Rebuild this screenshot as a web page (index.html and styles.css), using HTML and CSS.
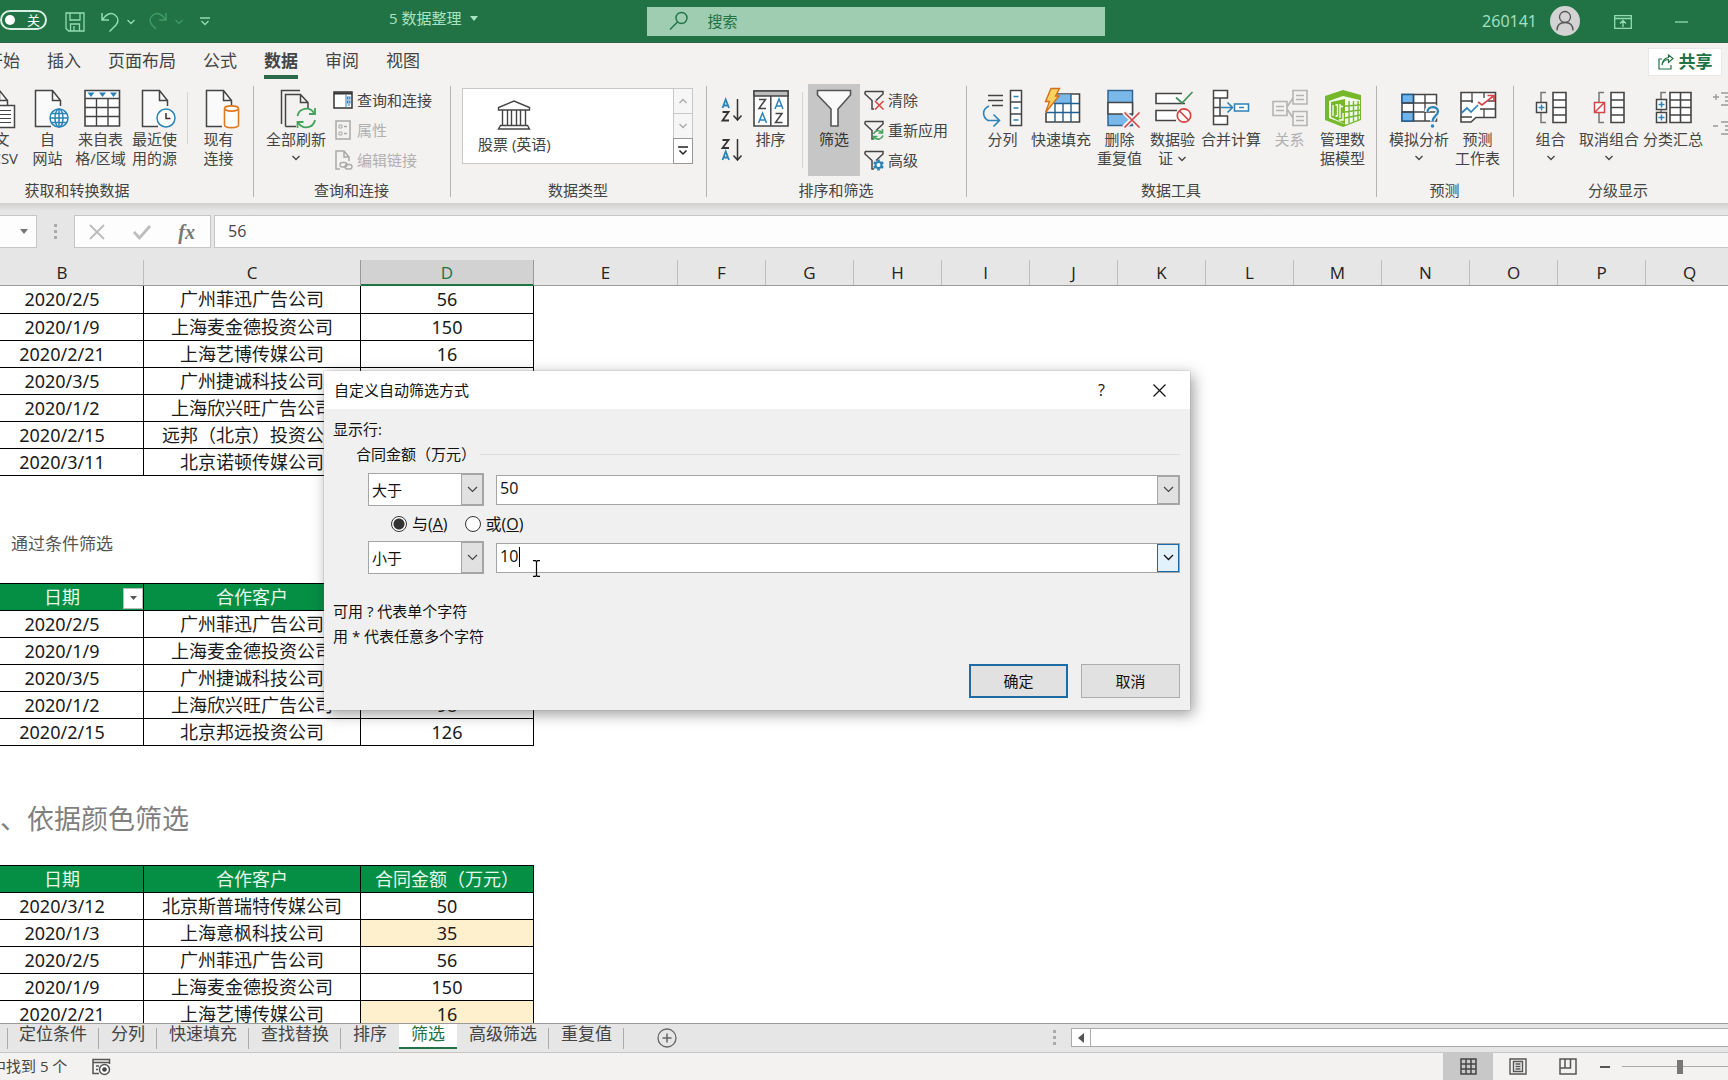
FILE: index.html
```html
<!DOCTYPE html>
<html lang="zh-CN">
<head>
<meta charset="utf-8">
<title>5 数据整理</title>
<link rel="stylesheet" href="styles.css">
</head>
<body>
<svg class="defs" aria-hidden="true">
  <symbol id="doc" viewBox="0 0 40 40"><path d="M7.500 1.500H24.500L33 11.500V37.500H7.500Z" fill="#fafafa"/><path d="M23 37.500H7.500V1.500H24.500L32.500 11.500V17M24.500 1.500V11.500H32.500" fill="none" stroke="#444" stroke-width="1.500"/></symbol>
  <symbol id="chev" viewBox="0 0 10 6"><path d="M1.500 1L5 4.500L8.500 1" fill="none" stroke="currentColor" stroke-width="1.300"/></symbol>
  <symbol id="funnel" viewBox="0 0 20 20"><path d="M1 1.500H19V4L12 10.500M8 19V10.500L1 4V1.500M8 10.500V19H10" fill="none" stroke="#444" stroke-width="1.500"/></symbol>
</svg>

<header class="titlebar">
  <button class="toggle" aria-label="自动保存"><span class="knob"></span>关</button>
  <button class="qa save" aria-label="保存"><svg width="20" height="20" viewBox="0 0 20 20"><path d="M1 1H19V19H3.500L1 16.500ZM5 1V8H15V1M5.500 19V12H14.500V19M9 14V19" fill="none" stroke="#93dcb2" stroke-width="1.300"/></svg></button>
  <button class="qa undo" aria-label="撤销"><svg width="18" height="20" viewBox="0 0 18 20"><path d="M1 1V8H8M1.500 7.500C5 2 10 0 14 3C18 6 17.500 10 15 13L8.500 19.500" fill="none" stroke="#93dcb2" stroke-width="1.500"/></svg><svg class="c1" width="10" height="6"><use href="#chev"/></svg></button>
  <button class="qa redo" aria-label="恢复"><svg width="18" height="20" viewBox="0 0 18 20"><path d="M17 1V8H10M16.500 7.500C13 2 8 0 4 3C0 6 .5 10 3 13L7 17" fill="none" stroke="#3f9a67" stroke-width="1.500"/></svg><svg class="c1" width="10" height="6"><use href="#chev"/></svg></button>
  <button class="qa more" aria-label="自定义快速访问工具栏"><svg width="10" height="10" viewBox="0 0 10 10"><path d="M0 1H10M1.500 4L5 7.500L8.500 4" fill="none" stroke="#93dcb2" stroke-width="1.300"/></svg></button>
  <button class="docname">5 数据整理<svg width="8" height="5" viewBox="0 0 8 5"><path d="M0 0H8L4 5Z" fill="#a9e3c2"/></svg></button>
  <label class="search"><svg width="20" height="20" viewBox="0 0 20 20"><circle cx="12.500" cy="7" r="5.500" fill="none" stroke="#217346" stroke-width="1.400"/><path d="M8.500 11L1 18.500" stroke="#217346" stroke-width="1.400"/></svg><input type="text" placeholder="搜索" aria-label="搜索"></label>
  <div class="account">
    <span>260141</span>
    <svg class="avatar" width="30" height="30" viewBox="0 0 30 30"><circle cx="15" cy="15" r="15" fill="#d3d3d3"/><circle cx="15" cy="11" r="5.500" fill="none" stroke="#555" stroke-width="1.300"/><path d="M7 24.500C7 18.500 11 16.500 15 16.500S23 18.500 23 24.500" fill="none" stroke="#555" stroke-width="1.300"/></svg>
    <button class="qa" aria-label="功能区显示选项"><svg width="18" height="14" viewBox="0 0 18 14"><path d="M.7 .7H17.300V13.300H.7ZM.7 3.500H17.300M9 12V5.500M6 8.500L9 5.500L12 8.500" fill="none" stroke="#93dcb2" stroke-width="1.300"/></svg></button>
    <button class="qa min" aria-label="最小化"><svg width="13" height="2"><path d="M0 1H13" stroke="#93dcb2" stroke-width="1.300"/></svg></button>
  </div>
</header>

<nav class="tabs">
  <a href="#">开始</a><a href="#">插入</a><a href="#">页面布局</a><a href="#">公式</a><a href="#" class="on">数据</a><a href="#">审阅</a><a href="#">视图</a>
  <button class="share"><svg width="16" height="16" viewBox="0 0 16 16"><path d="M4 5H1V15H13V11M4 11C5 7 7 5.500 10.500 5.500V8.500L15 4.500L10.500 1V3.500C6.500 4 4.500 6 4 11Z" fill="none" stroke="#217346" stroke-width="1.200"/></svg>共享</button>
</nav>

<div class="ribbon">
  <section class="group g-get">
    <div class="items">
      <button class="big"><svg width="40" height="40"><use href="#doc"/><path d="M20 16.500H39.500V38.500H20Z" fill="#fff" stroke="#444" stroke-width="1.500"/><path d="M23 21.500H36M23 25.500H36M23 29.500H36M23 33.500H36" stroke="#444"/></svg><span>从文<br>本/CSV</span></button>
      <button class="big"><svg width="40" height="40"><use href="#doc"/><g fill="#fff" stroke="#2b83b8" stroke-width="1.500"><circle cx="31" cy="29" r="9"/><ellipse cx="31" cy="29" rx="4" ry="9"/><path d="M22 29H40M31 20V38M23.500 24.500H38.500M23.500 33.500H38.500" fill="none"/></g></svg><span>自<br>网站</span></button>
      <button class="big"><svg width="40" height="40"><path d="M4 1.500H38.500V37H4Z" fill="#fff" stroke="#444" stroke-width="1.600"/><path d="M4 9.500H38.500M4 18.500H38.500M4 27.500H38.500M15.500 9V37M27 9V37" stroke="#444" stroke-width="1.400"/><path d="M6.500 3.500H13.500L10 8ZM18 3.500H25L21.500 8ZM29 3.500H36L32.500 8Z" fill="#2b83b8"/></svg><span>来自表<br>格/区域</span></button>
      <button class="big wide1"><svg width="40" height="40"><use href="#doc"/><circle cx="31" cy="29" r="9" fill="#fff" stroke="#2b83b8" stroke-width="1.500"/><path d="M31 24V29.500H35.500" fill="none" stroke="#333" stroke-width="1.500"/></svg><span>最近使<br>用的源</span></button>
      <i class="thin short"></i>
      <button class="big wide1"><svg width="40" height="40"><use href="#doc"/><path d="M25.500 20V36C25.500 39.500 39.500 39.500 39.500 36V20" fill="#fff" stroke="#dd7a22" stroke-width="1.600"/><ellipse cx="32.500" cy="19.500" rx="7" ry="2.600" fill="#fff" stroke="#dd7a22" stroke-width="1.600"/></svg><span>现有<br>连接</span></button>
    </div>
    <h3>获取和转换数据</h3>
  </section>
  <section class="group g-query">
    <div class="items">
      <button class="big four"><svg width="40" height="40"><path d="M5.500 35V1.500H24M9.500 37.500V5.500H24.500L32 13.500V19M24.500 5.500V13.500H32M9.500 37.500H20" fill="none" stroke="#444" stroke-width="1.500"/><path d="M21.500 27A9 9 0 0 1 38 24M39 19V25H33M39 31A9 9 0 0 1 22.500 34M21.500 39V33H27.500" fill="none" stroke="#45a35b" stroke-width="1.800"/></svg><span>全部刷新</span><svg class="c2" width="10" height="6"><use href="#chev"/></svg></button>
      <div class="small">
        <button><svg width="20" height="20" viewBox="0 0 20 20"><path d="M1 2H19V18H1Z" fill="#fff" stroke="#333" stroke-width="1.500"/><path d="M1 3.500H19" stroke="#333" stroke-width="2"/><path d="M13 5V18" stroke="#2b83b8"/><path d="M14.500 7H17V9H14.500ZM14.500 11H17V13H14.500ZM14.500 15H17" fill="none" stroke="#2b83b8" stroke-width="1.200"/></svg>查询和连接</button>
        <button disabled><svg width="20" height="20" viewBox="0 0 20 20"><path d="M3 1H17V19H3Z" fill="none" stroke="#a9a9a9" stroke-width="1.500"/><path d="M6 5H9V8H6ZM6 12H9V15H6Z" fill="none" stroke="#a9a9a9"/><path d="M11 6.500H14M11 13.500H14" stroke="#a9a9a9" stroke-width="1.500"/></svg>属性</button>
        <button disabled><svg width="20" height="20" viewBox="0 0 20 20"><path d="M7 19H3V1H11L16 7V11M11 1V7H16" fill="none" stroke="#a9a9a9" stroke-width="1.500"/><rect x="7" y="12.500" width="7" height="4.500" rx="2.200" fill="none" stroke="#a9a9a9" stroke-width="1.300"/><rect x="12" y="14.500" width="7" height="4.500" rx="2.200" fill="none" stroke="#a9a9a9" stroke-width="1.300"/></svg>编辑链接</button>
      </div>
    </div>
    <h3>查询和连接</h3>
  </section>
  <section class="group g-types">
    <div class="items">
      <div class="gallery">
        <button class="stock"><svg width="34" height="30" viewBox="0 0 34 30"><path d="M1.500 10V7.500L17 1L32.500 7.500V10ZM5.500 10V25.500M10.500 10V25.500M14.500 10V25.500M19.500 10V25.500M23.500 10V25.500M28.500 10V25.500M3.500 25.500H30.500L32.500 29H1.500Z" fill="none" stroke="#444" stroke-width="1.400"/></svg><span>股票 (英语)</span></button>
        <div class="scroller">
          <button aria-label="上一行"><svg class="up" width="10" height="6"><use href="#chev"/></svg></button>
          <button aria-label="下一行"><svg width="10" height="6"><use href="#chev"/></svg></button>
          <button class="exp" aria-label="更多"><svg width="10" height="10" viewBox="0 0 10 10"><path d="M0 1H10M1.500 4.500L5 8L8.500 4.500" fill="none" stroke="#222" stroke-width="1.500"/></svg></button>
        </div>
      </div>
    </div>
    <h3>数据类型</h3>
  </section>
  <section class="group g-sort">
    <div class="items">
      <div class="az">
        <button aria-label="升序"><svg width="22" height="24" viewBox="0 0 22 24"><path d="M1.500 10L4.700 1.500L8 10M2.500 7.500H7" fill="none" stroke="#2b83b8" stroke-width="1.800"/><path d="M1.500 14H7.500L1.500 22.500H8" fill="none" stroke="#333" stroke-width="1.800"/><path d="M16.500 1V21.500M12.500 17.500L16.500 22L20.500 17.500" fill="none" stroke="#333" stroke-width="1.500"/></svg></button>
        <button aria-label="降序"><svg width="22" height="24" viewBox="0 0 22 24"><path d="M1.500 22L4.700 13.500L8 22M2.500 19.500H7" fill="none" stroke="#2b83b8" stroke-width="1.800"/><path d="M1.500 2H7.500L1.500 10H8" fill="none" stroke="#333" stroke-width="1.800"/><path d="M16.500 1V21.500M12.500 17.500L16.500 22L20.500 17.500" fill="none" stroke="#333" stroke-width="1.500"/></svg></button>
      </div>
      <button class="big sortb"><svg width="40" height="40"><path d="M3 2H37V37H3Z" fill="#fff" stroke="#444" stroke-width="1.600"/><path d="M3 2H37V7H3Z" fill="#bdbdbd" stroke="#444" stroke-width="1.400"/><path d="M19.800 7V37" stroke="#444" stroke-width="1.500"/><path d="M8 10.500H14.500L8 19.500H15M24.500 24.500H31L24.500 33.500H31.500" fill="none" stroke="#444" stroke-width="1.500"/><path d="M7.500 34L11.500 24L15.500 34M9 31H14M24 20L28 10L32 20M25.500 17H30.500" fill="none" stroke="#2b83b8" stroke-width="1.500"/></svg><span>排序</span></button>
      <i class="thin"></i>
      <button class="big filter"><svg width="40" height="40"><path d="M3.500 1.500H36.500V6L24 20V37H17V20L3.500 6Z" fill="#fafafa" stroke="#555" stroke-width="1.600"/></svg><span>筛选</span></button>
      <div class="small tight">
        <button><svg width="20" height="20" viewBox="0 0 20 20"><use href="#funnel"/><path d="M11 11L19.500 19.500M19.500 11L11 19.500" stroke="#d64545" stroke-width="1.500"/></svg>清除</button>
        <button><svg width="20" height="20" viewBox="0 0 20 20"><use href="#funnel"/><path d="M9.500 14A5 5 0 0 1 18 12.500M18.500 9V13H14.500M19 15.500A5 5 0 0 1 10.500 17.500M9.500 20V16.500H13.500" fill="none" stroke="#45a35b" stroke-width="1.600"/></svg>重新应用</button>
        <button><svg width="20" height="20" viewBox="0 0 20 20"><use href="#funnel"/><circle cx="14.500" cy="15" r="3" fill="#fff" stroke="#2b83b8" stroke-width="2"/><path d="M14.500 9.500V12M14.500 18V20.500M9.800 12.300L12 13.500M17 16.500L19.200 17.700M19.200 12.300L17 13.500M12 16.500L9.800 17.700" stroke="#2b83b8" stroke-width="2.600"/></svg>高级</button>
      </div>
    </div>
    <h3>排序和筛选</h3>
  </section>
  <section class="group g-tools">
    <div class="items">
      <button class="big"><svg width="40" height="40"><path d="M5 6.500H20M5 11.500H20M9 16.500H20" stroke="#444" stroke-width="1.500"/><path d="M6 17C-1 20 -1 28 5 31.500H16M10.500 25.500L16.500 31.500L10.500 37.500" fill="none" stroke="#2b83b8" stroke-width="1.600"/><path d="M27.500 1.500H38.500V36.500H27.500ZM27.500 13H38.500M27.500 25H38.500" fill="#fff" stroke="#444" stroke-width="1.500"/><path d="M30.500 7.500H35.500M30.500 19H35.500M30.500 31H35.500" stroke="#2b83b8" stroke-width="1.500"/></svg><span>分列</span></button>
      <button class="big four"><svg width="40" height="40"><path d="M6 14H38V33H6Z" fill="#fff"/><path d="M15 5H38.500V33H5V24" fill="#fff" stroke="#444" stroke-width="1.600"/><path d="M16 5.500H30V14H12Z" fill="#7ab8ea"/><path d="M13 14.500H38M5 23.500H38M14 14V33M22 14V33M30 5V33" stroke="#1f5f93" stroke-width="1.400" fill="none"/><path d="M10 -0.500H18.500L14.500 7H18L4.500 23.500L8.500 12.500H4.500Z" fill="#fbd160" stroke="#d2701c" stroke-width="1.400"/></svg><span>快速填充</span></button>
      <button class="big"><svg width="40" height="40"><path d="M8 1.500H32.500V36.500H8Z" fill="#7ab8ea" stroke="#33658f" stroke-width="1.500"/><path d="M8 13.500H32.500V25H8Z" fill="#fff" stroke="#444" stroke-width="1.500"/><path d="M24 23L40 38.500M40 23L24 38.500" stroke="#f3f2f1" stroke-width="5"/><path d="M24.500 23.500L39.500 38.500M39.500 23.500L24.500 38.500" stroke="#d64545" stroke-width="1.600"/></svg><span>删除<br>重复值</span></button>
      <button class="big"><svg width="40" height="40"><path d="M29 4.500H3V14.500H32M24 21.500H3V31.500H23" fill="#fff" stroke="#444" stroke-width="1.600"/><path d="M23 8.500L29 14L39.500 3" fill="none" stroke="#45905b" stroke-width="1.700"/><circle cx="31" cy="26.500" r="6.700" fill="#fff" stroke="#d64545" stroke-width="1.700"/><path d="M26.500 22L35.500 31" stroke="#d64545" stroke-width="1.700"/></svg><span>数据验<br>证 <svg class="inl" width="10" height="6"><use href="#chev"/></svg></span></button>
      <button class="big four"><svg width="40" height="40"><path d="M2.500 1.500H16.500V9H9V27H16.500V35.500H2.500Z" fill="#fff"/><path d="M9 9H16.500V1.500H2.500V35.500H16.500V27H2.500M2.500 9H9M2.500 18.500H9M9 9V27" fill="none" stroke="#444" stroke-width="1.500"/><path d="M10 18.500H21M16.500 13.500L21.500 18.500L16.500 23.500" fill="none" stroke="#2b83b8" stroke-width="1.600"/><path d="M23.500 15H37.500V22H23.500ZM28 18.500H33" fill="#fff" stroke="#2b83b8" stroke-width="1.600"/></svg><span>合并计算</span></button>
      <button class="big" disabled><svg width="40" height="40"><path d="M3 12.500H17V26.500H3ZM23 1.500H37V15H23ZM23 22.500H37V36.500H23ZM17 18L23 9M17 20L23 29M6 17.500H14M6 21.500H14M26 6.500H34M26 10.500H34M26 27.500H34M26 31.500H34" fill="none" stroke="#b4b4b4" stroke-width="1.600"/></svg><span>关系</span></button>
      <button class="big"><svg width="40" height="40"><path d="M2 7L20 1L38 6V31L20 38L2 31Z" fill="#76b82a"/><path d="M6 12L20 7L37 11V30L23 35.500L6 29Z" fill="#f4f9ec"/><path d="M8 13L22 10V35L8 28Z" fill="#76b82a"/><path d="M10 16V27M12.500 16H14.500V27H12.500M17 29V17.500H20M17 20V15M20 24V31H16" fill="none" stroke="#fff" stroke-width="1.300"/><path d="M26 12V34M30.500 12V32.500M35 12V31M22 17L37 16M22 23L37 21M22 29L37 26" stroke="#76b82a" stroke-width="1.400"/></svg><span>管理数<br>据模型</span></button>
    </div>
    <h3>数据工具</h3>
  </section>
  <section class="group g-fore">
    <div class="items">
      <button class="big four"><svg width="40" height="40"><path d="M3 5.500H37.500V32H3Z" fill="#fff" stroke="#444" stroke-width="1.500"/><path d="M3 5.500H14.500V14H3ZM3 23H14.500V32H3Z" fill="#6db3ee" stroke="#1f5f93" stroke-width="1.500"/><path d="M3 14H37M3 23H37M14.500 5V32M26 5V32" stroke="#444" stroke-width="1.400"/><path d="M28 23C28 16 39 16 39 22.500C39 27 33.500 27 33.500 32.500" fill="none" stroke="#f3f2f1" stroke-width="5"/><path d="M28.500 23C28.500 16.500 39 16.500 39 22.500C39 27 33.500 27 33.500 32.500" fill="none" stroke="#2b83b8" stroke-width="2.200"/><circle cx="33.500" cy="37" r="1.700" fill="#2b83b8"/></svg><span>模拟分析</span><svg class="c2" width="10" height="6"><use href="#chev"/></svg></button>
      <button class="big"><svg width="40" height="40"><path d="M3 3.500H37.500V28.500H18L13 33H3Z" fill="#fff" stroke="#444" stroke-width="1.600"/><path d="M3 12H15M30 12H37M3 28H14M22 20H37M14 3V14M26 3V9M26 20V28" fill="none" stroke="#444" stroke-width="1.300"/><path d="M3.500 24L9 19L13 23L20 16" fill="none" stroke="#2b83b8" stroke-width="1.700"/><path d="M20 13L24 16L35.500 7M29.500 6.500H36V13" fill="none" stroke="#d64545" stroke-width="1.700"/></svg><span>预测<br>工作表</span></button>
    </div>
    <h3>预测</h3>
  </section>
  <section class="group g-outline">
    <div class="items">
      <button class="big"><svg width="40" height="40"><path d="M15 3.500H10V13M10 24V33.500H15" fill="none" stroke="#777" stroke-width="1.500"/><path d="M22 3.500H35V33.500H22ZM22 11H35M22 18.500H35M22 26H35" fill="#fff" stroke="#444" stroke-width="1.600"/><path d="M5.500 13.500H15.500V23.500H5.500Z" fill="#fff" stroke="#444" stroke-width="1.500"/><path d="M7.500 18.500H13.500M10.500 15.500V21.500" stroke="#2b83b8" stroke-width="1.500"/></svg><span>组合</span><svg class="c2" width="10" height="6"><use href="#chev"/></svg></button>
      <button class="big four"><svg width="40" height="40"><path d="M15 3.500H10V13M10 24V33.500H15" fill="none" stroke="#777" stroke-width="1.500"/><path d="M22 3.500H35V33.500H22ZM22 11H35M22 18.500H35M22 26H35" fill="#fff" stroke="#444" stroke-width="1.600"/><path d="M5.500 13.500H15.500V23.500H5.500ZM5.500 23.500L15.500 13.500" fill="#fff" stroke="#d64545" stroke-width="1.500"/></svg><span>取消组合</span><svg class="c2" width="10" height="6"><use href="#chev"/></svg></button>
      <button class="big four"><svg width="40" height="40"><path d="M13 3.500H8V11M8 20V24" fill="none" stroke="#777" stroke-width="1.500"/><path d="M17 3.500H38V33.500H17ZM17 11H38M17 18.500H38M17 26H38M27.500 3.500V33.500" fill="#fff" stroke="#444" stroke-width="1.600"/><path d="M3.500 10.500H13.500V20.500H3.500ZM3.500 23.500H13.500V33.500H3.500Z" fill="#fff" stroke="#444" stroke-width="1.500"/><path d="M5.500 15.500H11.500M8.500 12.500V18.500M5.500 28.500H11.500M8.500 25.500V31.500" stroke="#2b83b8" stroke-width="1.500"/></svg><span>分类汇总</span></button>
      <div class="detail">
        <button disabled aria-label="显示明细数据"><svg width="28" height="16" viewBox="0 0 28 16"><path d="M0 6H6M3 3V9M8 2H28M12 6H28M12 10H28M8 14H28" stroke="#999" stroke-width="1.300"/></svg></button>
        <button disabled aria-label="隐藏明细数据"><svg width="28" height="16" viewBox="0 0 28 16"><path d="M0 6H5M8 2H28M12 6H28M12 10H28M8 14H28" stroke="#999" stroke-width="1.300"/></svg></button>
      </div>
    </div>
    <h3>分级显示</h3>
  </section>
</div>

<div class="formulabar">
  <button class="namebox" aria-label="名称框"><svg width="8" height="5" viewBox="0 0 8 5"><path d="M0 0H8L4 5Z" fill="#777"/></svg></button>
  <i class="dots"></i>
  <div class="fxbox">
    <button aria-label="取消"><svg width="16" height="16" viewBox="0 0 16 16"><path d="M1 1L15 15M15 1L1 15" stroke="#bdbdbd" stroke-width="2"/></svg></button>
    <button aria-label="输入"><svg width="18" height="16" viewBox="0 0 18 16"><path d="M1 8L6.500 14L17 2" fill="none" stroke="#bdbdbd" stroke-width="2.800"/></svg></button>
    <button class="fx" aria-label="插入函数">fx</button>
  </div>
  <input type="text" value="56" aria-label="编辑栏">
</div>

<div class="cols">
  <span class="b">B</span><span class="c">C</span><span class="d">D</span><span class="e">E</span><span>F</span><span>G</span><span>H</span><span>I</span><span>J</span><span>K</span><span>L</span><span>M</span><span>N</span><span>O</span><span>P</span><span>Q</span>
</div>

<main class="sheet">
  <table class="first">
    <colgroup><col class="cb"><col class="cc"><col class="cd"></colgroup>
    <tbody>
    <tr><td>2020/2/5</td><td>广州菲迅广告公司</td><td>56</td></tr>
    <tr><td>2020/1/9</td><td>上海麦金德投资公司</td><td>150</td></tr>
    <tr><td>2020/2/21</td><td>上海艺博传媒公司</td><td>16</td></tr>
    <tr><td>2020/3/5</td><td>广州捷诚科技公司</td><td></td></tr>
    <tr><td>2020/1/2</td><td>上海欣兴旺广告公司</td><td></td></tr>
    <tr><td>2020/2/15</td><td>远邦（北京）投资公司</td><td></td></tr>
    <tr><td>2020/3/11</td><td>北京诺顿传媒公司</td><td></td></tr>
    </tbody>
  </table>
  <h2 class="sub">）通过条件筛选</h2>
  <table>
    <colgroup><col class="cb"><col class="cc"><col class="cd"></colgroup>
    <thead><tr><th>日期<button class="drop" aria-label="筛选日期"><svg width="9" height="6" viewBox="0 0 9 6"><path d="M1 1H8L4.500 5Z" fill="#555"/></svg></button></th><th>合作客户</th><th></th></tr></thead>
    <tbody>
    <tr><td>2020/2/5</td><td>广州菲迅广告公司</td><td></td></tr>
    <tr><td>2020/1/9</td><td>上海麦金德投资公司</td><td></td></tr>
    <tr><td>2020/3/5</td><td>广州捷诚科技公司</td><td></td></tr>
    <tr><td>2020/1/2</td><td>上海欣兴旺广告公司</td><td>98</td></tr>
    <tr><td>2020/2/15</td><td>北京邦远投资公司</td><td>126</td></tr>
    </tbody>
  </table>
  <h2 class="main">、依据颜色筛选</h2>
  <table>
    <colgroup><col class="cb"><col class="cc"><col class="cd"></colgroup>
    <thead><tr><th>日期</th><th>合作客户</th><th>合同金额（万元）</th></tr></thead>
    <tbody>
    <tr><td>2020/3/12</td><td>北京斯普瑞特传媒公司</td><td>50</td></tr>
    <tr><td>2020/1/3</td><td>上海意枫科技公司</td><td class="hl">35</td></tr>
    <tr><td>2020/2/5</td><td>广州菲迅广告公司</td><td>56</td></tr>
    <tr><td>2020/1/9</td><td>上海麦金德投资公司</td><td>150</td></tr>
    <tr><td>2020/2/21</td><td>上海艺博传媒公司</td><td class="hl">16</td></tr>
    </tbody>
  </table>
</main>

<div class="sheettabs">
  <nav>
    <a href="#">定位条件</a><a href="#">分列</a><a href="#">快速填充</a><a href="#">查找替换</a><a href="#" class="pre">排序</a><a href="#" class="on">筛选</a><a href="#">高级筛选</a><a href="#">重复值</a>
  </nav>
  <button class="add" aria-label="新工作表"><svg width="20" height="20" viewBox="0 0 20 20"><circle cx="10" cy="10" r="9" fill="none" stroke="#666" stroke-width="1.300"/><path d="M10 5.500V14.500M5.500 10H14.500" stroke="#666" stroke-width="1.500"/></svg></button>
  <div class="hscroll"><i class="dots"></i><button aria-label="向左滚动"><svg width="6" height="10" viewBox="0 0 6 10"><path d="M6 0V10L0 5Z" fill="#555"/></svg></button><span class="track"></span></div>
</div>

<footer class="status">
  <span class="found">中找到 5 个</span>
  <svg class="macro" width="19" height="18" viewBox="0 0 19 18"><path d="M7 15.500H1V1.500H17.500V6M1 4.500H17.500M4 8H7M4 11.500H6" fill="none" stroke="#555" stroke-width="1.500"/><circle cx="12.500" cy="11.500" r="5" fill="#fff" stroke="#555" stroke-width="1.500"/><circle cx="12.500" cy="11.500" r="2.300" fill="#444"/></svg>
  <div class="views">
    <button class="on" aria-label="普通"><svg width="17" height="17" viewBox="0 0 17 17"><path d="M1 1H16V16H1ZM1 6H16M1 11H16M6 1V16M11 1V16" fill="none" stroke="#444" stroke-width="1.500"/></svg></button>
    <button aria-label="页面布局"><svg width="18" height="17" viewBox="0 0 18 17"><path d="M1 1H17V16H1ZM4.500 3.500H13.500V13.500H4.500ZM6.500 6H11.500M6.500 8.500H11.500M6.500 11H11.500" fill="none" stroke="#555" stroke-width="1.400"/></svg></button>
    <button aria-label="分页预览"><svg width="18" height="17" viewBox="0 0 18 17"><path d="M1 1H17V16H1ZM1 10H11.500V1M6 1V10" fill="none" stroke="#555" stroke-width="1.500"/></svg></button>
    <button class="zoomout" aria-label="缩小"></button>
    <input type="range" min="0" max="100" value="48" aria-label="缩放">
  </div>
</footer>

<form class="dialog" role="dialog" aria-label="自定义自动筛选方式">
  <div class="dlg-title"><span>自定义自动筛选方式</span><button type="button" class="help" aria-label="帮助">?</button><button type="button" class="close" aria-label="关闭"><svg width="13" height="13" viewBox="0 0 13 13"><path d="M.5 .5L12.500 12.500M12.500 .5L.5 12.500" stroke="#111" stroke-width="1.200"/></svg></button></div>
  <div class="dlg-body">
    <p>显示行:</p>
    <div class="legend"><span>合同金额（万元）</span></div>
    <div class="cond">
      <div class="sel"><select aria-label="条件一"><option>大于</option></select><span><svg width="11" height="7" viewBox="0 0 11 7"><path d="M1 1L5.500 5.500L10 1" fill="none" stroke="#444" stroke-width="1.200"/></svg></span></div>
      <div class="combo"><input type="text" value="50" aria-label="值一"><button type="button" aria-label="展开"><svg width="11" height="7" viewBox="0 0 11 7"><path d="M1 1L5.500 5.500L10 1" fill="none" stroke="#444" stroke-width="1.200"/></svg></button></div>
    </div>
    <div class="radios"><input type="radio" name="op" id="opA" checked><label for="opA">与(<u>A</u>)</label><input type="radio" name="op" id="opO"><label for="opO">或(<u>O</u>)</label></div>
    <div class="cond">
      <div class="sel"><select aria-label="条件二"><option>小于</option></select><span><svg width="11" height="7" viewBox="0 0 11 7"><path d="M1 1L5.500 5.500L10 1" fill="none" stroke="#444" stroke-width="1.200"/></svg></span></div>
      <div class="combo"><input type="text" value="10" aria-label="值二"><i class="caret"></i><svg class="ibeam" width="9" height="17" viewBox="0 0 9 17"><path d="M1 .7H3.500L4.500 1.500L5.500 .7H8M4.500 1.500V15.500M1 16.300H3.500L4.500 15.500L5.500 16.300H8" fill="none" stroke="#000" stroke-width="1.200"/></svg><button type="button" class="hot" aria-label="展开"><svg width="11" height="7" viewBox="0 0 11 7"><path d="M1 1L5.500 5.500L10 1" fill="none" stroke="#111" stroke-width="1.300"/></svg></button></div>
    </div>
    <p class="tip">可用 ? 代表单个字符</p>
    <p class="tip2">用 * 代表任意多个字符</p>
    <div class="actions"><button type="button" class="ok">确定</button><button type="button">取消</button></div>
  </div>
</form>
</body>
</html>
```

FILE: styles.css
```css
* { box-sizing: border-box; }
body {
  margin: 0;
  height: 100vh;
  display: flex;
  flex-direction: column;
  overflow: hidden;
  position: relative;
  background: #fff;
  color: #444;
  font: 15px/20px "Open Sans", "Noto Sans CJK SC", sans-serif;
}
button, input, select { font: inherit; color: inherit; margin: 0; padding: 0; border: 0; background: none; border-radius: 0; outline: 0; }
h2, h3, p { margin: 0; font-weight: 400; }
a { color: inherit; text-decoration: none; }
svg { display: block; flex: none; overflow: visible; }
.defs { position: absolute; width: 0; height: 0; }

/* title bar */
.titlebar { flex: none; height: 43px; display: flex; align-items: center; background: #217346; border-bottom: 1px solid #2d6245; color: #a9e3c2; padding-right: 40px; }
.toggle { width: 47px; height: 20px; margin-top: -3px; border: 2px solid #d8f0e2; border-radius: 10px; display: flex; align-items: center; gap: 12px; padding-left: 3px; color: #fff; font-size: 13px; line-height: 16px; }
.knob { width: 10px; height: 10px; border-radius: 50%; background: #fff; }
.qa { display: flex; align-items: center; gap: 7px; color: #93dcb2; padding-top: 2px; }
.save { margin-left: 18px; }
.undo { margin-left: 16px; }
.redo { margin-left: 13px; color: #3f9a67; }
.more { margin-left: 16px; }
.docname { margin-left: 179px; display: flex; align-items: center; gap: 9px; padding-bottom: 6px; }
.search { margin-left: 169px; flex: 0 1 458px; height: 29px; background: #9fcdb1; display: flex; align-items: center; padding-left: 22px; gap: 18px; }
.search input { flex: 1; min-width: 0; }
.search input::placeholder { color: #217346; opacity: 1; }
.account { margin-left: auto; display: flex; align-items: center; }
.account span { font-size: 16px; }
.avatar { margin: 0 34px 0 13px; }
.min { margin-left: 43px; }

/* ribbon tabs */
.tabs { flex: none; height: 41px; background: #f3f2f1; display: flex; align-items: flex-start; gap: 27px; padding-right: 6px; margin-left: -14px; font-size: 17px; line-height: 36px; }
.tabs a { height: 36px; border-bottom: 4px solid transparent; white-space: nowrap; }
.tabs .on { font-weight: 700; border-color: #2b6a49; }
.share { margin: 5px 0 0 auto; width: 74px; height: 28px; background: #fff; border: 1px solid #e8e8e8; display: flex; align-items: center; justify-content: center; gap: 5px; color: #217346; font-weight: 700; line-height: 26px; }

/* ribbon */
.ribbon { flex: none; height: 119px; margin-left: -98px; display: flex; background: #f3f2f1; }
.group { flex: none; display: flex; flex-direction: column; justify-content: space-between; padding-bottom: 3px; position: relative; }
.group::after { content: ""; position: absolute; right: 0; top: 2px; bottom: 6px; width: 1px; background: #b4b4b4; }
.group h3 { font-size: 15px; line-height: 20px; text-align: center; padding-right: 2px; }
.items { display: flex; height: 92px; }
.g-get { width: 352px; }
.g-get .items { justify-content: flex-end; padding-right: 8px; }
.g-query { width: 197px; }
.g-query .items { padding-left: 10px; }
.g-types { width: 256px; }
.g-sort { width: 260px; }
.g-tools { width: 410px; }
.g-tools .items { padding-left: 9px; }
.g-fore { width: 137px; }
.g-fore .items, .g-outline .items { padding-left: 10px; }
.g-outline { width: 210px; }
.g-outline::after { display: none; }
.big { flex: none; width: 53px; display: flex; flex-direction: column; align-items: center; padding-top: 5px; line-height: 19px; white-space: nowrap; }
.big span { text-align: center; margin-top: 1px; }
.big:disabled, .small button:disabled { color: #b0b0b0; }
.four { width: 64px; }
.wide1 { width: 55px; }
.c2 { margin-top: 6px; }
.inl { display: inline-block; vertical-align: 2px; }
.thin { flex: none; width: 1px; margin: 8px 3px; background: #d5d5d5; }
.g-get .thin { margin-left: 5px; }
.short { height: 52px; }
.small { display: flex; flex-direction: column; padding-top: 1px; margin-left: 5px; }
.small button { display: flex; align-items: center; gap: 4px; height: 30px; white-space: nowrap; }
.tight { margin-left: 4px; }
.gallery { display: flex; width: 231px; height: 76px; margin: 4px 0 0 11px; background: #fff; border: 1px solid #c8c8c8; }
.stock { flex: 1; display: flex; flex-direction: column; align-items: flex-start; padding: 11px 0 0 15px; gap: 4px; }
.stock svg { margin-left: 19px; }
.scroller { width: 19px; display: flex; flex-direction: column; border-left: 1px solid #c8c8c8; color: #aaa; }
.scroller button { flex: 1; display: flex; align-items: center; justify-content: center; background: #f6f6f6; border-bottom: 1px solid #c8c8c8; }
.scroller .exp { background: #fff; border: 0; outline: 1px solid #999; }
.up { transform: rotate(180deg); }
.az { width: 22px; margin-left: 14px; padding-top: 14px; display: flex; flex-direction: column; gap: 16px; }
.sortb { width: 55px; }
.g-sort .thin { margin: 8px 5px 8px 4px; }
.filter { width: 52px; background: #c6c6c6; color: #333; }
.detail { display: flex; flex-direction: column; gap: 13px; padding-top: 7px; margin-left: 8px; }

/* formula bar */
.formulabar { flex: none; height: 57px; padding: 12px 0 12px; display: flex; background: linear-gradient(#d2d0ce, #e6e6e6 8px); }
.formulabar > * { flex: none; height: 33px; background: #fdfdfd; border: 1px solid #c6c6c6; }
.namebox { width: 37px; border-left: 0; display: flex; align-items: center; justify-content: flex-end; padding-right: 8px; }
.formulabar .dots { margin: 0 17px; border: 0; height: 33px; background: none; }
.dots { flex: none; width: 3px; display: flex; align-items: center; }
.dots::before { content: ""; width: 3px; height: 15px; background: repeating-linear-gradient(#aaa 0 3px, transparent 3px 6px); }
.fxbox { width: 137px; display: flex; align-items: center; justify-content: space-between; padding: 0 15px 0 14px; }
.fx { font: italic 700 20px/26px "Liberation Serif", serif; color: #777; }
.formulabar input { flex: 1; min-width: 0; margin-left: 3px; border-right: 0; padding: 0 0 2px 13px; font-size: 16px; }

/* column headings */
.cols { flex: none; height: 26px; margin-left: -19px; display: flex; background: #e6e6e6; border-bottom: 1px solid #9b9b9b; color: #222; font-size: 17px; line-height: 25px; text-align: center; }
.cols span { flex: none; width: 88px; border-right: 1px solid #bdbdbd; }
.cols .b { width: 163px; }
.cols .c { width: 217px; border-color: #999; }
.cols .d { width: 173px; background: #d2d2d2; color: #217346; border-color: #999; border-bottom: 2px solid #217346; height: 26px; }
.cols .e { width: 144px; }

/* cells */
.sheet { flex: 1; min-height: 0; overflow: hidden; margin-left: -20px; }
table { border-collapse: collapse; table-layout: fixed; width: 554px; color: #1a1a1a; font: 18px/24px "Noto Sans", "Noto Sans CJK SC", sans-serif; text-align: center; }
.cb { width: 163px; }
.cc { width: 217px; }
.cd { width: 173px; }
td, th { height: 27px; padding: 0; border: 1px solid #000; white-space: nowrap; position: relative; }
th { background: #058f45; color: #e6f7ec; font-weight: 400; }
.first tr:first-child td { border-top: 0; }
.hl { background: #fff0cd; }
.drop { position: absolute; right: 0; bottom: 1px; width: 20px; height: 21px; background: #fff; border: 1px solid #bbb; display: flex; align-items: center; justify-content: center; }
.sub { height: 107px; padding: 56px 0 0 14px; font-size: 17px; line-height: 24px; color: #555; }
.main { height: 119px; padding: 55px 0 0 20px; font-size: 27px; line-height: 36px; color: #7f7f7f; }

/* sheet tabs */
.sheettabs { flex: none; height: 30px; background: #e6e6e6; border-top: 1px solid #9b9b9b; border-bottom: 1px solid #c6c6c6; display: flex; font-size: 17px; }
.sheettabs nav { display: flex; margin: 0 0 3px 7px; }
.sheettabs a { position: relative; padding: 0 12px; line-height: 20px; }
.sheettabs a::after, .sheettabs a:first-child::before { content: ""; position: absolute; right: 0; top: 4px; bottom: 0; width: 1px; background: #ababab; }
.sheettabs a:first-child::before { right: auto; left: 0; }
.sheettabs .pre::after { display: none; }
.sheettabs .on { background: #fff; color: #217346; border-bottom: 2px solid #217346; }
.sheettabs .on::after { display: none; }
.add { margin: 0 auto 0 33px; display: flex; align-items: center; }
.hscroll { flex: 0 1 675px; display: flex; padding: 4px 0 5px; }
.hscroll .dots { margin-right: 15px; }
.hscroll button { width: 20px; background: #fff; border: 1px solid #ababab; display: flex; align-items: center; justify-content: center; }
.track { flex: 1; background: #fff; border: 1px solid #ababab; border-width: 1px 0; }

/* status bar */
.status { flex: none; height: 27px; background: #f3f2f1; display: flex; align-items: center; }
.found { margin-left: -9px; padding-bottom: 2px; white-space: nowrap; }
.macro { margin-left: 25px; }
.views { margin-left: auto; display: flex; align-items: center; height: 27px; }
.views button { width: 50px; height: 27px; display: flex; align-items: center; justify-content: center; padding-bottom: 1px; }
.views .on { background: #c8c8c8; }
.views .zoomout { width: 10px; height: 2px; background: #555; margin: 0 12px 0 7px; }
.views input { appearance: none; width: 121px; height: 15px; margin-right: -15px; background: linear-gradient(#aaa, #aaa) center / 100% 1px no-repeat; }
.views input::-webkit-slider-thumb { appearance: none; width: 6px; height: 14px; background: #777; }

/* filter dialog */
.dialog { position: absolute; left: 324px; top: 371px; width: 866px; background: #f0f0f0; color: #111; box-shadow: 0 0 1px #888, 3px 4px 14px rgba(0, 0, 0, .4); }
.dlg-title { height: 38px; background: #fff; display: flex; align-items: center; padding: 0 24px 0 10px; }
.help { margin-left: auto; font-size: 16px; }
.close { margin-left: 48px; }
.dlg-body { padding: 10px 10px 12px 9px; }
.legend { display: flex; align-items: center; gap: 4px; margin: 5px 0 9px 23px; }
.legend::after { content: ""; flex: 1; height: 1px; background: #dcdcdc; }
.cond { display: flex; align-items: center; gap: 12px; margin-left: 35px; }
.sel { position: relative; width: 116px; height: 33px; border: 1px solid #a5a5a5; background: #fff; }
.sel select { appearance: none; width: 100%; height: 31px; padding-left: 3px; }
.sel span { position: absolute; right: 0; top: 0; width: 22px; height: 31px; background: #e1e1e1; border: 1px solid #a5a5a5; display: flex; align-items: center; justify-content: center; pointer-events: none; }
.combo { position: relative; flex: 1; height: 30px; border: 1px solid #a5a5a5; background: #fff; display: flex; }
.combo input { flex: 1; min-width: 0; padding-left: 3px; font-size: 16px; line-height: 24px; height: 25px; }
.combo button { width: 22px; background: #e1e1e1; border: 1px solid #a5a5a5; display: flex; align-items: center; justify-content: center; }
.combo .hot { background: #e3f1fb; border-color: #1d6aa5; }
.caret { position: absolute; left: 22px; top: 3px; width: 1px; height: 20px; background: #000; }
.ibeam { position: absolute; left: 35px; top: 16px; }
.radios { display: flex; align-items: center; height: 35px; margin-left: 58px; }
.radios input { appearance: none; width: 16px; height: 16px; border: 1px solid #333; border-radius: 50%; background: #fff; margin-right: 5px; }
.radios input:checked { background: radial-gradient(circle, #333 5px, #fff 6px); }
.radios label { margin-right: 17px; font-size: 16px; }
.tip { margin-top: 27px; }
.tip2 { margin-top: 5px; }
.actions { display: flex; justify-content: flex-end; gap: 13px; margin-top: 18px; }
.actions button { width: 99px; height: 34px; background: #e1e1e1; border: 1px solid #adadad; }
.actions .ok { border: 2px solid #1d6aa5; }
```
